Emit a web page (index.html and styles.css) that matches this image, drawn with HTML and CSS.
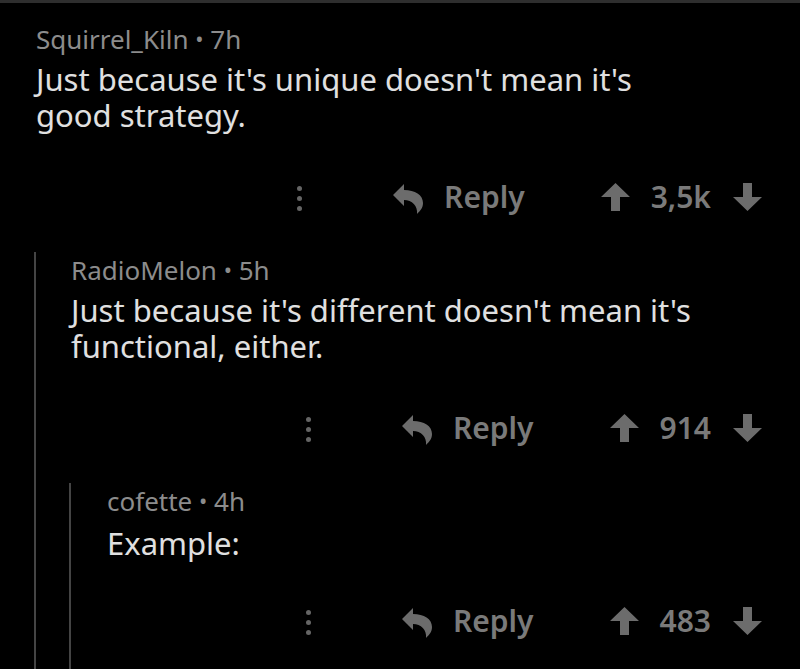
FILE: index.html
```html
<!DOCTYPE html>
<html>
<head>
<meta charset="utf-8">
<link rel="stylesheet" href="styles.css">
</head>
<body>
<div class="page">
  <div class="comment top">
    <div class="meta">Squirrel_Kiln <span class="dot">•</span> 7h</div>
    <div class="text">Just because it's unique doesn't mean it's<br>good strategy.</div>
    <div class="actions">
      <span class="more"><i></i><i></i><i></i></span>
      <svg class="reply-ic" viewBox="0 0 30 30" width="30" height="30"><path d="M0 11 L11 0 V6 C22 6 30 11 30 19 C30 24 27 27 24 30 C25 22 19 16 11 16 V22 Z"/></svg>
      <span class="reply">Reply</span>
      <svg class="vote up" viewBox="0 0 29 28" width="29" height="28"><path d="M14.5 0 L29 14 H19 V28 H10 V14 H0 Z"/></svg>
      <span class="score">3,5k</span>
      <svg class="vote down" viewBox="0 0 29 28" width="29" height="28"><path d="M14.5 28 L29 14 H19 V0 H10 V14 H0 Z"/></svg>
    </div>
    <div class="thread">
      <div class="comment">
        <div class="meta">RadioMelon <span class="dot">•</span> 5h</div>
        <div class="text">Just because it's different doesn't mean it's<br>functional, either.</div>
        <div class="actions">
          <span class="more"><i></i><i></i><i></i></span>
          <svg class="reply-ic" viewBox="0 0 30 30" width="30" height="30"><path d="M0 11 L11 0 V6 C22 6 30 11 30 19 C30 24 27 27 24 30 C25 22 19 16 11 16 V22 Z"/></svg>
          <span class="reply">Reply</span>
          <svg class="vote up" viewBox="0 0 29 28" width="29" height="28"><path d="M14.5 0 L29 14 H19 V28 H10 V14 H0 Z"/></svg>
          <span class="score">914</span>
          <svg class="vote down" viewBox="0 0 29 28" width="29" height="28"><path d="M14.5 28 L29 14 H19 V0 H10 V14 H0 Z"/></svg>
        </div>
        <div class="thread">
          <div class="comment">
            <div class="meta">cofette <span class="dot">•</span> 4h</div>
            <div class="text">Example:</div>
            <div class="actions">
              <span class="more"><i></i><i></i><i></i></span>
              <svg class="reply-ic" viewBox="0 0 30 30" width="30" height="30"><path d="M0 11 L11 0 V6 C22 6 30 11 30 19 C30 24 27 27 24 30 C25 22 19 16 11 16 V22 Z"/></svg>
              <span class="reply">Reply</span>
              <svg class="vote up" viewBox="0 0 29 28" width="29" height="28"><path d="M14.5 0 L29 14 H19 V28 H10 V14 H0 Z"/></svg>
              <span class="score">483</span>
              <svg class="vote down" viewBox="0 0 29 28" width="29" height="28"><path d="M14.5 28 L29 14 H19 V0 H10 V14 H0 Z"/></svg>
            </div>
            <div class="spacer"></div>
          </div>
        </div>
      </div>
    </div>
  </div>
</div>
</body>
</html>
```
FILE: styles.css
```css
html, body {
  margin: 0;
  padding: 0;
  background: #000;
}
body {
  width: 800px;
  height: 669px;
  overflow: hidden;
  font-family: "Noto Sans", "Open Sans", sans-serif;
}
.page {
  border-top: 3px solid #2e2e2e;
  padding: 0 38px 0 36px;
  height: 666px;
  box-sizing: border-box;
}
.top {
  padding-top: 19px;
}
.meta {
  font-size: 26px;
  line-height: 32px;
  color: #8c8c8c;
  white-space: nowrap;
}
.dot {
  font-size: 22px;
  vertical-align: 2px;
}
.text {
  margin-top: 6px;
  font-size: 31px;
  line-height: 36px;
  color: #e0e0e0;
  white-space: nowrap;
}
.thread .thread .text {
  margin-top: 8px;
}
.actions {
  margin-top: 40px;
  height: 48px;
  display: flex;
  justify-content: flex-end;
  align-items: center;
  color: #7a7a7a;
  font-size: 30px;
  line-height: 48px;
  font-weight: 600;
}
.thread .thread .actions {
  margin-top: 36px;
}
.more {
  display: flex;
  flex-direction: column;
  gap: 5px;
  margin-right: 91px;
  padding-top: 2px;
}
.more i {
  display: block;
  width: 5px;
  height: 5px;
  border-radius: 50%;
  background: #656565;
}
.reply-ic {
  fill: #6c6c6c;
  margin-right: 21px;
  margin-top: 4px;
}
.reply {
  margin-right: 76px;
}
.vote {
  fill: #6c6c6c;
}
.score {
  margin: 0 22px 0 21px;
}
.thread {
  margin-top: 31px;
  margin-left: -2px;
  border-left: 2px solid #444;
  padding: 1px 0 0 35px;
}
.thread .thread {
  padding-left: 36px;
}
.spacer {
  height: 40px;
}
```
